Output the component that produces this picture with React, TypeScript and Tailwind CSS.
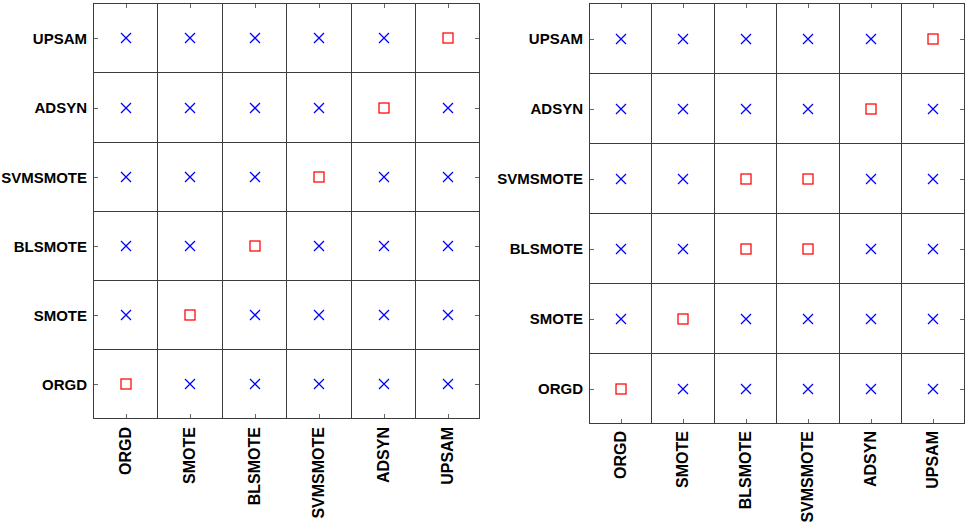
import React from "react";

const rows = ["UPSAM", "ADSYN", "SVMSMOTE", "BLSMOTE", "SMOTE", "ORGD"];
const cols = ["ORGD", "SMOTE", "BLSMOTE", "SVMSMOTE", "ADSYN", "UPSAM"];

// which cells hold a square, per plot
const leftSquares = rows.map((r) => [r]);
const rightSquares = rows.map((r) =>
  r === "SVMSMOTE" || r === "BLSMOTE" ? ["BLSMOTE", "SVMSMOTE"] : [r]
);

function Cross() {
  return (
    <svg width="12" height="12" viewBox="0 0 12 12" className="block">
      <path d="M1 1 L11 11 M11 1 L1 11" stroke="#0000ff" strokeWidth="1.25" fill="none" />
    </svg>
  );
}

function Square() {
  return (
    <svg width="12" height="12" viewBox="0 0 12 12" className="block">
      <rect x="1" y="1" width="10" height="10" stroke="#ff0000" strokeWidth="1.25" fill="none" />
    </svg>
  );
}

function Plot({
  squares,
  labelW,
  colsT,
  rowsT,
  xGap,
}: {
  squares: string[][];
  labelW: string;
  colsT: string;
  rowsT: string;
  xGap: string;
}) {
  return (
    <div className="flex flex-col pt-[3px]">
      <div className="flex">
        {/* Row labels */}
        <div className={`grid ${rowsT} gap-px py-px ${labelW} pr-[6px]`}>
          {rows.map((r) => (
            <div key={r} className="flex items-center justify-end text-[15px] font-bold text-black leading-none">
              {r}
            </div>
          ))}
        </div>

        {/* Matrix */}
        <div className={`grid ${colsT} ${rowsT} gap-px p-px bg-[#3c3c3c]`}>
          {rows.map((r, ri) =>
            cols.map((c, ci) => (
              <div key={r + c} className="relative bg-white flex items-center justify-center">
                {squares[ri].includes(c) ? <Square /> : <Cross />}
                {ri === 0 && <span className="absolute top-0 left-1/2 w-px h-[4px] bg-[#666]" />}
                {ri === 5 && <span className="absolute bottom-0 left-1/2 w-px h-[4px] bg-[#666]" />}
                {ci === 0 && <span className="absolute left-0 top-1/2 h-px w-[4px] bg-[#666]" />}
                {ci === 5 && <span className="absolute right-0 top-1/2 h-px w-[4px] bg-[#666]" />}
              </div>
            ))
          )}
        </div>
      </div>

      {/* Column labels */}
      <div className="flex">
        <div className={labelW} />
        <div className={`grid ${colsT} gap-px px-px ${xGap}`}>
          {cols.map((c) => (
            <div key={c} className="flex justify-center items-start">
              <span className="[writing-mode:vertical-rl] rotate-180 text-[16px] font-bold text-black leading-none">
                {c}
              </span>
            </div>
          ))}
        </div>
      </div>
    </div>
  );
}

export default function App() {
  return (
    <div
      className="w-[968px] h-[527px] bg-white flex overflow-hidden"
      style={{ fontFamily: '"Liberation Sans", Arial, sans-serif' }}
    >
      <Plot
        squares={leftSquares}
        labelW="w-[93px]"
        colsT="grid-cols-[63px_64px_63px_64px_63px_63px]"
        rowsT="grid-rows-[68px_69px_68px_68px_68px_68px]"
        xGap="pt-[8px]"
      />
      <Plot
        squares={rightSquares}
        labelW="w-[109px]"
        colsT="grid-cols-[61px_62px_61px_62px_61px_62px]"
        rowsT="grid-rows-[69px_69px_69px_69px_69px_69px]"
        xGap="pt-[7px]"
      />
    </div>
  );
}
